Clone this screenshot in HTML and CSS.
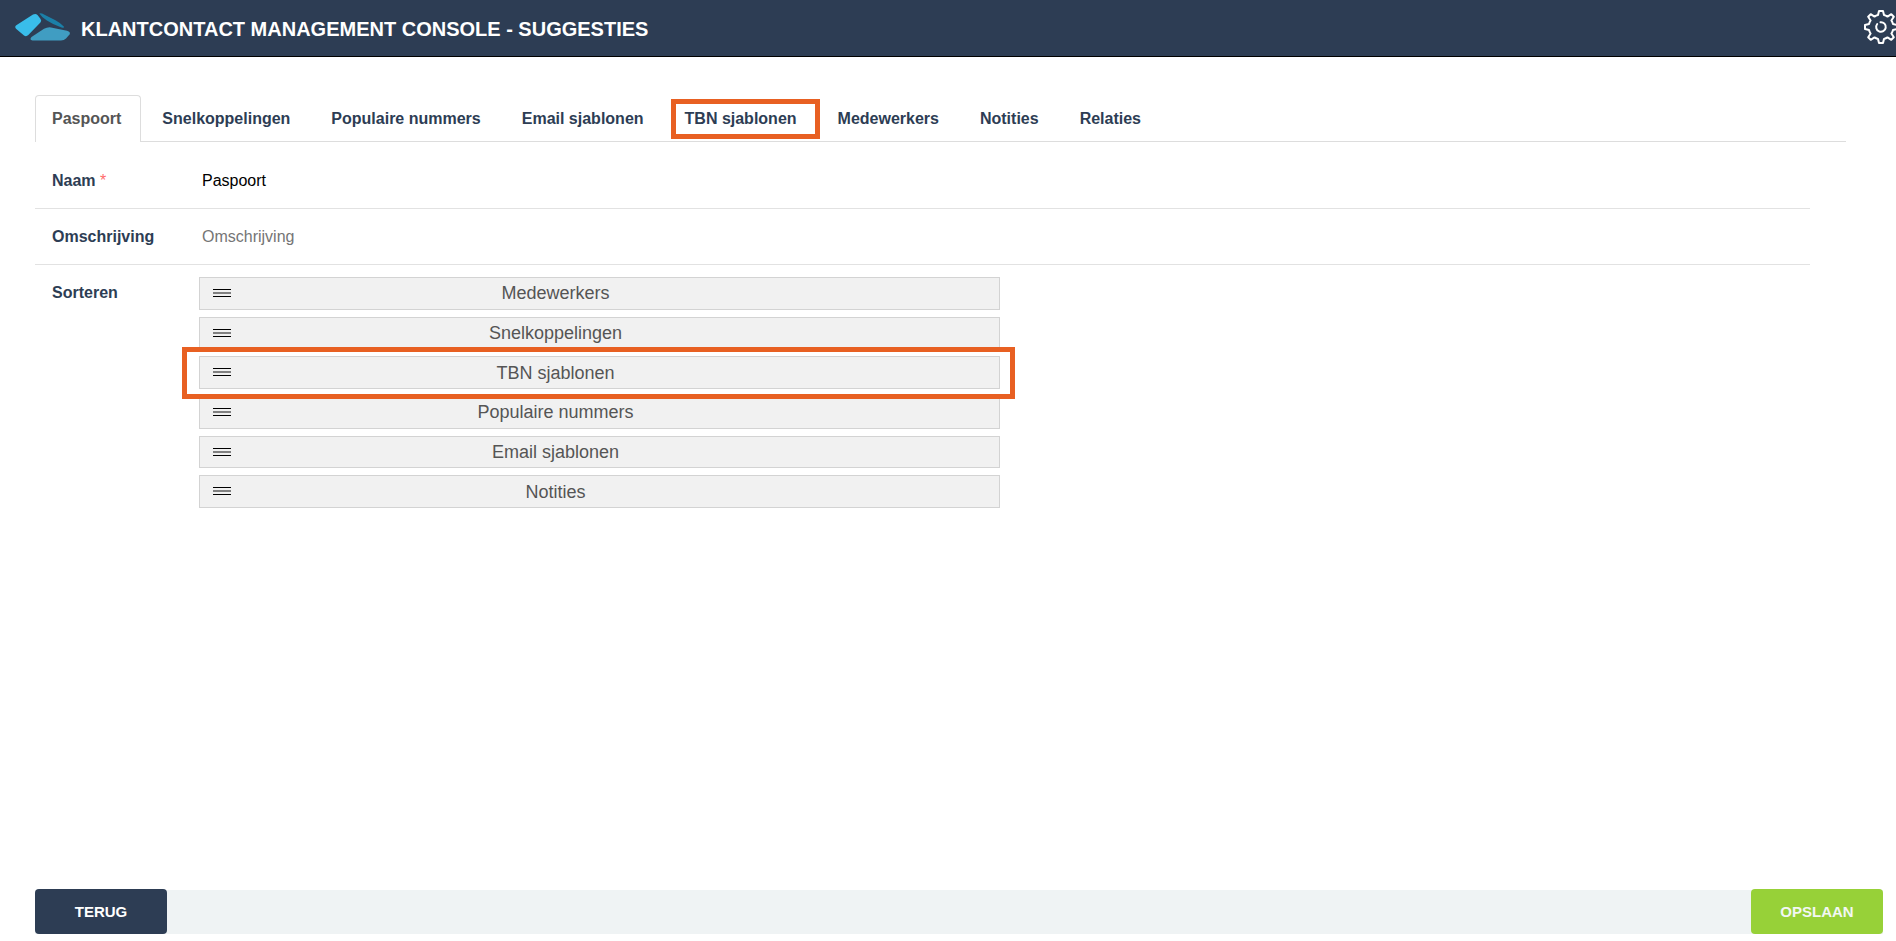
FILE: index.html
```html
<!DOCTYPE html>
<html lang="nl">
<head>
<meta charset="utf-8">
<title>Klantcontact Management Console - Suggesties</title>
<link rel="stylesheet" href="styles.css">
</head>
<body>
<header class="topbar">
  <svg class="logo" viewBox="0 0 56 28" aria-hidden="true">
    <path fill="#39bdea" d="M1.300 11.300Q-.8 13 1.300 15L9 21.500Q11.300 23 13.300 21L25.400 8.500Q27 6.800 25.400 4.800L22.500 .9Q20.500-.8 18 .6Z"/>
    <path fill="#1b80a8" d="M24.300-.6Q26.500-1 29 .5L40 6Q46 9.200 49 12.700Q49.500 14.200 46.500 13.500Q38 10.500 31.500 6.200Q26.500 2.800 24.300-.6Z"/>
    <path fill="#409dc2" d="M16.500 23L29 14.800Q32.500 12.900 36 13.400L52 16.800Q56 18 54.500 20.500L51 24.400Q49 26.400 46 26.400H17.500Q14 25.600 16.500 23Z"/>
  </svg>
  <h1 class="title">KLANTCONTACT MANAGEMENT CONSOLE - SUGGESTIES</h1>
  <button class="settings" type="button" aria-label="Instellingen">
    <svg class="gear" viewBox="0 0 34 34" aria-hidden="true">
      <path d="M15 1H19L20 5Q21.800 5.400 23.500 6.600L27.300 4.200L29.800 6.700L27.400 10.500Q28.500 12 29 14L33 15V19L29 20Q28.500 22 27.400 23.500L29.800 27.300L27.300 29.800L23.500 27.400Q22 28.500 20 29L19 33H15L14 29Q12 28.500 10.500 27.400L6.700 29.800L4.200 27.300L6.600 23.500Q5.500 22 5 20L1 19V15L5 14Q5.500 12 6.600 10.500L4.200 6.700L6.700 4.200L10.500 6.600Q12 5.500 14 5Z"/>
      <path d="M16.500 12.200A4.800 4.800 0 1 1 13.200 14"/>
    </svg>
  </button>
</header>
<main class="content">
  <nav class="tabs">
    <a class="tab tab-active" href="#paspoort">Paspoort</a>
    <a class="tab" href="#snelkoppelingen">Snelkoppelingen</a>
    <a class="tab" href="#nummers">Populaire nummers</a>
    <a class="tab" href="#email">Email sjablonen</a>
    <a class="tab tab-marked" href="#tbn">TBN sjablonen</a>
    <a class="tab" href="#medewerkers">Medewerkers</a>
    <a class="tab" href="#notities">Notities</a>
    <a class="tab" href="#relaties">Relaties</a>
  </nav>
  <form class="form" id="paspoort">
    <div class="row">
      <label class="label" for="naam">Naam <span class="required">*</span></label>
      <input class="field" id="naam" type="text" value="Paspoort">
    </div>
    <div class="row">
      <label class="label" for="omschrijving">Omschrijving</label>
      <input class="field" id="omschrijving" type="text" placeholder="Omschrijving">
    </div>
    <div class="row row-sort">
      <span class="label" id="sorteren">Sorteren</span>
      <ul class="sort-list" aria-labelledby="sorteren">
        <li class="sort-item"><span class="handle"></span>Medewerkers</li>
        <li class="sort-item"><span class="handle"></span>Snelkoppelingen</li>
        <li class="sort-item sort-marked"><span class="handle"></span>TBN sjablonen</li>
        <li class="sort-item"><span class="handle"></span>Populaire nummers</li>
        <li class="sort-item"><span class="handle"></span>Email sjablonen</li>
        <li class="sort-item"><span class="handle"></span>Notities</li>
      </ul>
    </div>
  </form>
</main>
<footer class="actions">
  <button class="button button-back" type="button">TERUG</button>
  <button class="button button-save" type="submit" form="paspoort">OPSLAAN</button>
</footer>
</body>
</html>
```
FILE: styles.css
```css
* {
  box-sizing: border-box;
}

body {
  display: flex;
  flex-direction: column;
  min-height: 100vh;
  margin: 0;
  background: #fff;
  color: #2d3d54;
  font: 16px/24px "Liberation Sans", Arial, sans-serif;
}

.topbar {
  display: flex;
  align-items: center;
  height: 57px;
  padding-left: 15px;
  overflow: hidden;
  background: #2d3d54;
  border-bottom: 1px solid #000;
}

.logo {
  width: 56px;
  height: 28px;
  margin-right: 10px;
  overflow: visible;
}

.title {
  flex: 1;
  margin: 0;
  padding-top: 1px;
  color: #fff;
  font-size: 20px;
  line-height: 24px;
}

.settings {
  width: 32px;
  height: 34px;
  margin-bottom: 3px;
  padding: 0;
  background: none;
  border: 0;
}

.gear {
  display: block;
  width: 34px;
  height: 34px;
  fill: none;
  stroke: #fff;
  stroke-width: 2;
  stroke-linejoin: round;
  stroke-linecap: round;
}

.content {
  flex: 1;
  padding: 38px 50px 32px 35px;
}

.tabs {
  display: flex;
  gap: 4px;
  border-bottom: 1px solid #ddd;
}

.tab {
  position: relative;
  margin-bottom: -1px;
  padding: 11px 19px 11px 16px;
  border: 1px solid transparent;
  border-bottom: 0;
  border-radius: 4px 4px 0 0;
  color: #2d3d54;
  font-weight: bold;
  text-decoration: none;
}

.tab-active {
  background: #fff;
  border-color: #ddd;
  color: #555;
}

.tab-marked::after,
.sort-marked::after {
  content: "";
  position: absolute;
  z-index: 1;
  border: 5px solid #e86022;
}

.tab-marked::after {
  inset: 3px -4px 3px 2px;
}

.form {
  margin-right: 36px;
  padding-top: 11px;
}

.row {
  display: flex;
  height: 56px;
  padding: 16px 0 0 17px;
  border-bottom: 1px solid #e2e2e2;
}

.row-sort {
  height: auto;
  border-bottom: 0;
}

.label {
  flex: none;
  width: 147px;
  font-weight: bold;
}

.required {
  color: #ff6b6b;
  font-weight: normal;
}

.field {
  flex: 1;
  height: 24px;
  padding: 0 3px;
  background: none;
  border: 0;
  outline: 0;
  color: #000;
  font: inherit;
}

.field::placeholder {
  color: #757575;
  opacity: 1;
}

.sort-list {
  display: grid;
  grid-auto-rows: 1fr;
  gap: 7px;
  flex: 0 1 801px;
  min-height: 231px;
  margin: -4px 0 0;
  padding: 0;
  list-style: none;
}

.sort-item {
  position: relative;
  display: flex;
  align-items: center;
  justify-content: center;
  background: #f1f1f1;
  border: 1px solid #d3d3d3;
  color: #555;
  font-size: 18px;
  padding-right: 88px;
}

.handle {
  position: absolute;
  left: 13px;
  top: 11px;
  width: 18px;
  height: 8px;
  border: solid #000;
  border-width: 1px 0;
}

.handle::before {
  content: "";
  display: block;
  height: 2px;
  margin-top: 2px;
  background: #808080;
}

.sort-marked::after {
  inset: -10px -16px -11px -18px;
}

.actions {
  display: flex;
  justify-content: space-between;
  margin: 0 13px 7px 35px;
  background: linear-gradient(#fff 1px, #eff3f4 1px);
}

.button {
  width: 132px;
  height: 45px;
  border: 0;
  border-radius: 4px;
  color: #fff;
  font: bold 15px/24px "Liberation Sans", Arial, sans-serif;
}

.button-back {
  background: #2d3d54;
}

.button-save {
  background: #97d138;
  color: #f2f7f4;
}
```
